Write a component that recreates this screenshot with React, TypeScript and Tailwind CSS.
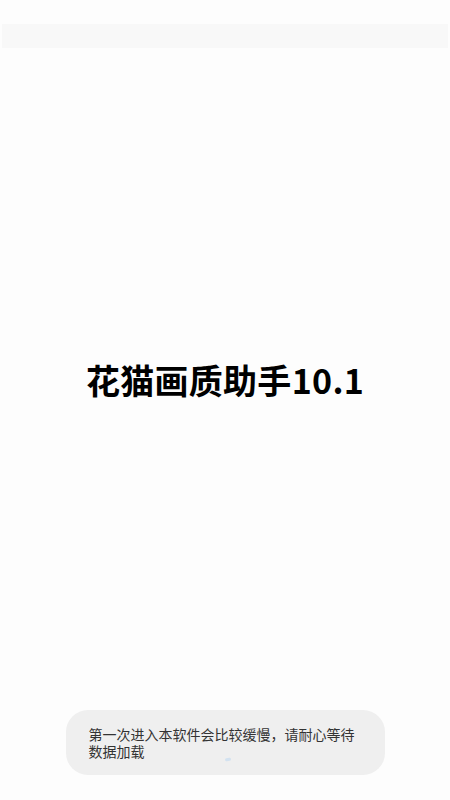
export default function App() {
  return (
    <div
      className="relative flex h-[800px] w-[450px] flex-col overflow-hidden bg-[#fdfdfd]"
      style={{ fontFamily: '"Noto Sans CJK SC", Roboto, sans-serif' }}
    >
      {/* top bar */}
      <div className="mx-[2px] mt-[24px] h-[24px] bg-[#f8f8f8]" />

      {/* title */}
      <div className="flex flex-1 items-center justify-center pt-[2px]">
        <h1 className="text-[34px] font-bold leading-none tracking-[0.3px] text-black">
          花猫画质助手10.1
        </h1>
      </div>

      {/* toast */}
      <div className="relative mx-auto mb-[25px] h-[65px] w-[319px] rounded-[22px] bg-[#efefef] pl-[23px] pr-[20px] pt-[16px]">
        <p className="text-[14px] leading-[17px] text-[#333333]">
          第一次进入本软件会比较缓慢，请耐心等待数据加载
        </p>
        <div className="absolute left-[159px] top-[48px] h-[3px] w-[6px] -rotate-12 rounded-full bg-[#d3e2f0]" />
      </div>
    </div>
  );
}
